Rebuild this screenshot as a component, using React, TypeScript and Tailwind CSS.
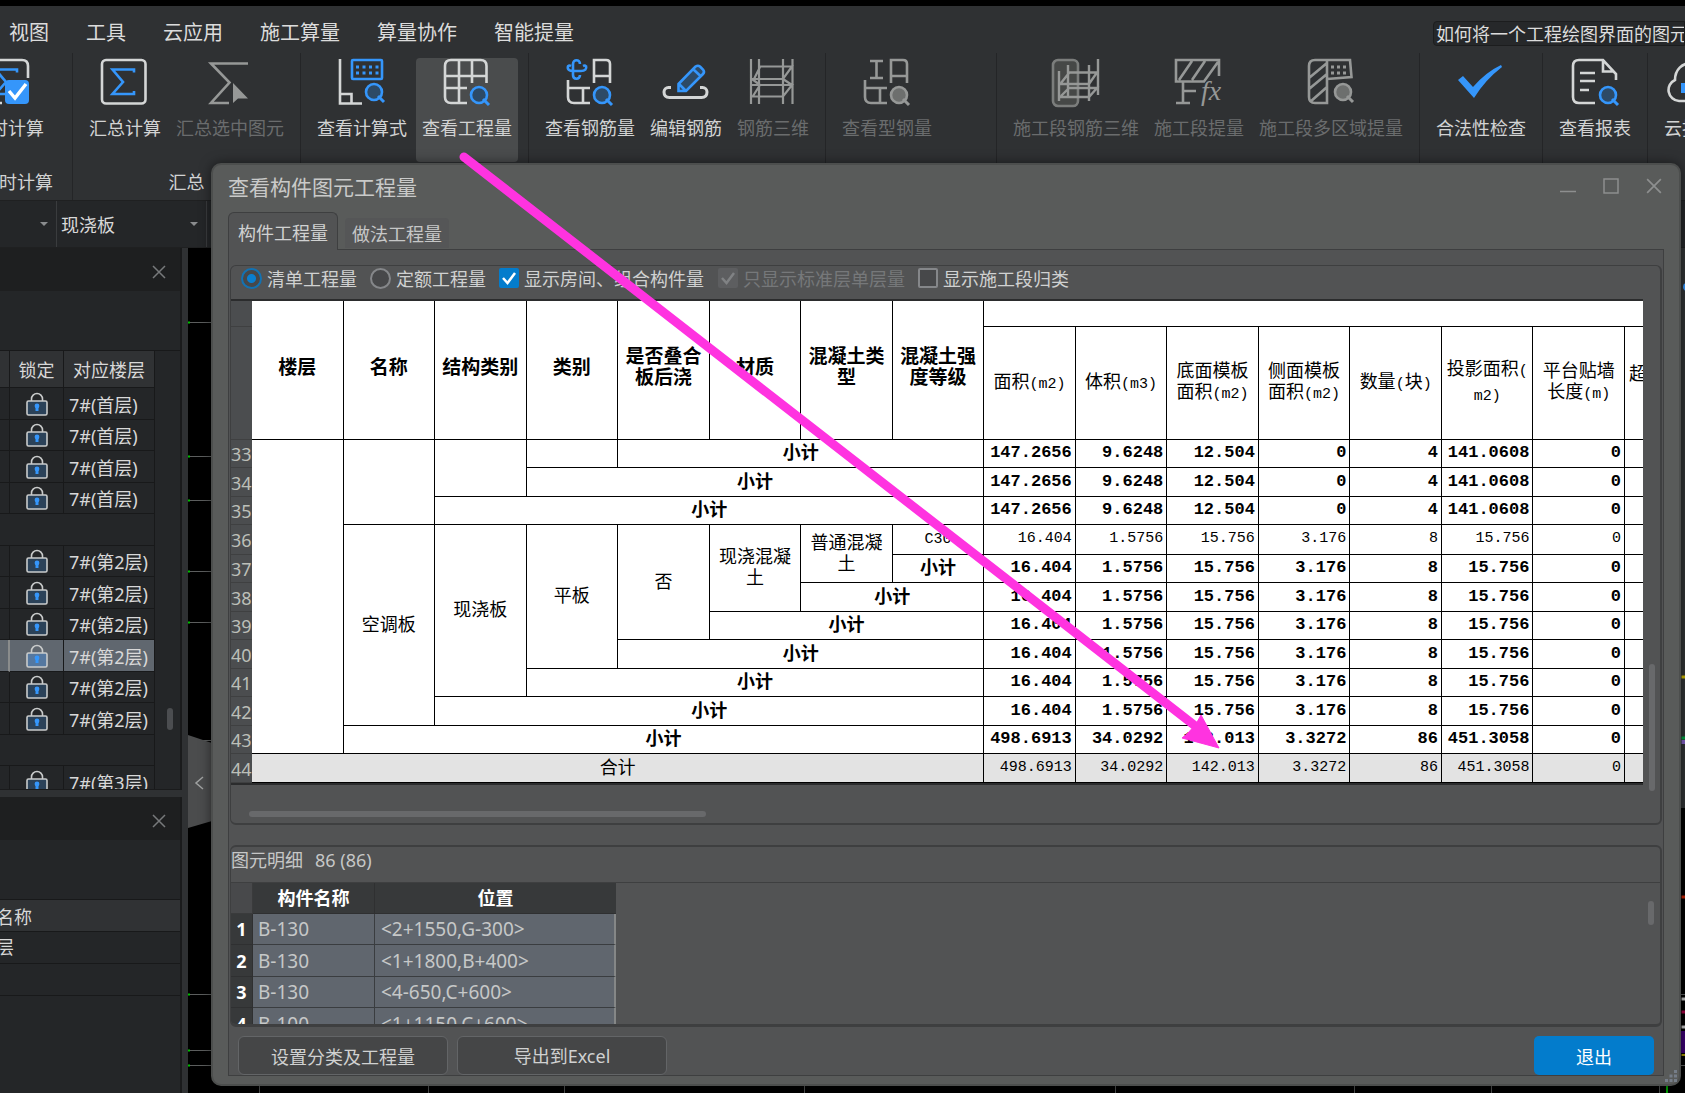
import React from "react";

const WHITE = "#d4d6d6";
const BLUE = "#3596fb";
const GREY = "#969897";

type IconProps = { children: React.ReactNode };

function Icon({ children }: IconProps) {
  return (
    <svg className="size-12 shrink-0 overflow-visible" viewBox="0 0 48 48" fill="none" strokeWidth="2.6" aria-hidden="true">
      {children}
    </svg>
  );
}

function Lens({ x = 36, y = 37, dim = false }: { x?: number; y?: number; dim?: boolean }) {
  const c = dim ? GREY : BLUE;
  return (
    <g stroke={c}>
      <circle cx={x} cy={y} r="8" fill={dim ? "#6d6f6e" : "#2d4a66"} />
      <path d={`M${x + 4} ${y + 4}L${x + 10} ${y + 10}`} strokeWidth="3" />
    </g>
  );
}

const Sigma = () => <path stroke={BLUE} d="M33 14.5V11.5H11.5L22 24 11.5 36H33V33" />;

const icons = {
  realtime: (
    <Icon>
      <path stroke={WHITE} d="M44 20V8q0-6-6-6H7Q1 2 1 8v31q0 6 6 6h11" />
      <Sigma />
      <rect x="21" y="22" width="24" height="24" rx="4" fill={BLUE} />
      <path d="M25 33l6 7 11-14" stroke="#fff" strokeWidth="3.4" />
    </Icon>
  ),
  sum: (
    <Icon>
      <rect x="1" y="2" width="43.5" height="43.5" rx="4" stroke={WHITE} />
      <Sigma />
    </Icon>
  ),
  sumSelected: (
    <Icon>
      <path d="M42 5.500H5L23.500 24.500 5 45H23" stroke={GREY} />
      <path d="M27 25v20l5-4.500h10z" fill={GREY} />
    </Icon>
  ),
  formula: (
    <Icon>
      <path stroke={WHITE} d="M2 1V45.500H24M2 36H13.500V45.500" />
      <rect x="14" y="2" width="30" height="19" rx="1" stroke={BLUE} />
      <path d="M18 9h24M18 15h24" stroke={BLUE} strokeWidth="3" strokeDasharray="3 3.500" />
      <Lens y={34} />
    </Icon>
  ),
  quantity: (
    <Icon>
      <path stroke={WHITE} d="M43.500 25V8q0-6-6-6H8Q2 2 2 8v31q0 6 6 6h16M16 2V45M29 2V25M2 18H43.500M2 30H24" />
      <Lens />
    </Icon>
  ),
  rebar: (
    <Icon>
      <path stroke={BLUE} d="M14 6c0-5-7-5-7 0v11c0 5 7 5 7 0M2 8c-1 4 2 5 5 5h8c4 0 6-2 5-5M5 8c-2-1-3 0-3 1M17 8c2-1 3 0 3 1" />
      <path stroke={WHITE} d="M28 25V2H40q4 0 4 4V25M28 18H44M2 22V39q0 6 6 6h16M2 30H24M17 30V45" />
      <Lens />
    </Icon>
  ),
  edit: (
    <Icon>
      <path stroke={WHITE} strokeWidth="3" d="M9 29.500H6.500a4.500 4.500 0 0 0-4.500 4.500q0 5.500 5.500 5.500h32q5.500 0 5.500-5.500a4.500 4.500 0 0 0-4.500-4.500H38" />
      <path stroke={BLUE} d="M16.500 26L33.500 8.500q2.500-1.500 4.500 0l3 3q2 2.500 0 4.500L24 33h-7.500zM31 11l8 7.500M17 26l7 7" fill="#2d4a66" />
    </Icon>
  ),
  rebar3d: (
    <Icon>
      <path stroke={GREY} d="M2 1V46M10 1V46M34 1V46M43.500 1V46M10 8.500H43L34 21H2M5 21L11 9M2 27H43L34 38.500H2M4 38L11 27M3 21l8 6M34 21l9 6" strokeWidth="2.200" />
    </Icon>
  ),
  steel: (
    <Icon>
      <path stroke={GREY} d="M7 3H20M7 20H20M13.500 3V20M28 25V2H40q4 0 4 4V25M28 18H44M2 22V39q0 6 6 6h16M2 30H24M17 30V45" />
      <Lens dim />
    </Icon>
  ),
  segment3d: (
    <Icon>
      <rect x="1" y="2" width="25" height="46" rx="5" stroke="#7b7d7c" fill="#464847" />
      <path stroke={GREY} strokeWidth="2.400" d="M7 13V43M16 7V40M37 7V43M46 1V37M15 14.500H45L37 26H7M9 25L17 15M15 30H45L37 39H7M9 38L17 30" />
    </Icon>
  ),
  segmentQty: (
    <Icon>
      <path stroke={GREY} d="M44 18V2H1V23.500H29L43 4M4 22L17 3M17 22L30 3M8 24V45M1 45H15M8 33H21" />
      <text x="26" y="42" fill={GREY} className="font-['Liberation_Serif'] text-[28px] italic">fx</text>
    </Icon>
  ),
  segmentArea: (
    <Icon>
      <path stroke={GREY} d="M20 2H8Q2 2 2 8v31q0 6 6 6h12zM2 20L20 5M2 31L20 16M3 44L20 29M20 2H43l1.500 17L20 21" />
      <path d="M24 9h16M24 15h16" stroke={GREY} strokeWidth="3" strokeDasharray="3 3" />
      <Lens y={34} dim />
    </Icon>
  ),
  check: (
    <Icon>
      <path d="M1 22l5-4 10 11Q29 14 44 7l1 2Q28 22 17 40z" fill={BLUE} />
    </Icon>
  ),
  report: (
    <Icon>
      <path stroke={WHITE} d="M24 45H8q-6 0-6-6V8q0-6 6-6H32L45 16v6M32 2V13.500H43M9 15H24M9 23H24M9 32H18" />
      <Lens x={37} />
    </Icon>
  ),
  cloud: (
    <Icon>
      <path stroke={WHITE} d="M12 43a11 11 0 0 1-4-21C8 0 38 0 40 20c10 4 8 22-4 23z" />
      <path d="M16 25V35M23 20V35M30 23V35" stroke={BLUE} strokeWidth="4" />
    </Icon>
  ),
};

type Tool = { label: string; icon: React.ReactNode; off?: boolean; on?: boolean };

const toolGroups: { caption?: string; wide?: boolean; tools: Tool[] }[] = [
  {
    caption: "汇总",
    tools: [
      { label: "汇总计算", icon: icons.sum },
      { label: "汇总选中图元", icon: icons.sumSelected, off: true },
    ],
  },
  {
    tools: [
      { label: "查看计算式", icon: icons.formula },
      { label: "查看工程量", icon: icons.quantity, on: true },
    ],
  },
  {
    tools: [
      { label: "查看钢筋量", icon: icons.rebar },
      { label: "编辑钢筋", icon: icons.edit },
      { label: "钢筋三维", icon: icons.rebar3d, off: true },
    ],
  },
  { wide: true, tools: [{ label: "查看型钢量", icon: icons.steel, off: true }] },
  {
    tools: [
      { label: "施工段钢筋三维", icon: icons.segment3d, off: true },
      { label: "施工段提量", icon: icons.segmentQty, off: true },
      { label: "施工段多区域提量", icon: icons.segmentArea, off: true },
    ],
  },
  { tools: [{ label: "合法性检查", icon: icons.check }] },
  { tools: [{ label: "查看报表", icon: icons.report }] },
  { tools: [{ label: "云指标", icon: icons.cloud }] },
];

function ToolButton({ label, icon, off, on }: Tool) {
  return (
    <button
      disabled={off}
      className={`flex h-[104px] shrink-0 flex-col items-center gap-[9px] rounded px-[6px] text-lg/6 whitespace-nowrap ${
        on ? "bg-[#4a4c4d]" : ""
      } ${off ? "text-[#6a6c6d]" : "text-[#d2d3d3]"}`}
    >
      {icon}
      <span>{label}</span>
    </button>
  );
}

function Ribbon() {
  return (
    <div className="flex h-[150px] shrink-0 overflow-hidden bg-[#2f3133] pt-[3px] text-[#d2d3d3]">
      <div className="flex w-[72px] shrink-0 flex-col items-end justify-between pt-[5px] pb-[7px]">
        <div className="flex pr-[22px]">
          <ToolButton label="实时计算" icon={icons.realtime} />
        </div>
        <span className="pr-[19px] text-lg/6 whitespace-nowrap">实时计算</span>
      </div>
      {toolGroups.map((g, i) => (
        <div
          key={i}
          className={`flex shrink-0 flex-col items-center justify-between border-l border-[#242527] px-[10px] pt-[5px] pb-[7px] ${
            g.wide ? "w-[171px]" : ""
          }`}
        >
          <div className={`flex gap-[3px] ${g.wide ? "self-start" : ""}`}>
            {g.tools.map((t) => (
              <ToolButton key={t.label} {...t} />
            ))}
          </div>
          <span className="h-6 text-lg/6">{g.caption}</span>
        </div>
      ))}
    </div>
  );
}

function Combo({ value, width, label }: { value: string; width: string; label: string }) {
  return (
    <div className={`flex items-center border-r border-[#3a3c3e] ${width}`}>
      <select
        aria-label={label}
        defaultValue={value}
        className="min-w-0 flex-1 appearance-none bg-transparent pl-1 text-lg/6 text-[#d8d8d8] outline-none"
      >
        <option>{value}</option>
      </select>
      <svg className="mr-2 h-2 w-2 shrink-0" viewBox="0 0 8 8" aria-hidden="true">
        <path d="M0 2h8L4 6z" fill="#8a8c8e" />
      </svg>
    </div>
  );
}

function CloseMark({ className }: { className: string }) {
  return (
    <svg className={className} viewBox="0 0 14 14" stroke="currentColor" fill="none" strokeWidth="1.500" aria-hidden="true">
      <path d="M1 1L13 13M13 1L1 13" />
    </svg>
  );
}

function Lock({ selected }: { selected: boolean }) {
  return (
    <svg className="mx-auto h-6 w-[22px]" viewBox="0 0 22 24" fill="none" aria-label="锁定" role="img">
      <path d="M5.500 9V7a5.500 5.500 0 0 1 11 0V9" stroke="#c9cbcb" strokeWidth="1.600" />
      <rect x="1" y="9" width="20" height="14" rx="1.500" stroke="#c9cbcb" strokeWidth="1.600" fill={selected ? "#5578a0" : "#2b4259"} />
      <path d="M11 13v6" stroke={BLUE} strokeWidth="3" />
      <circle cx="11" cy="14" r="2.400" fill={BLUE} />
    </svg>
  );
}

const drawings = [
  "7#(首层)", "7#(首层)", "7#(首层)", "7#(首层)", "",
  "7#(第2层)", "7#(第2层)", "7#(第2层)", "7#(第2层)", "7#(第2层)", "7#(第2层)", "",
  "7#(第3层)",
];

function DrawingPanel() {
  return (
    <section className="flex h-[542px] shrink-0 flex-col overflow-hidden border-r-2 border-b border-[#1a1b1c] bg-[#242628]">
      <header className="flex h-[43px] shrink-0 items-center justify-end bg-[#1e1f20] pt-1 pr-[14px]">
        <button aria-label="关闭" className="text-[#77797b]">
          <CloseMark className="size-[14px]" />
        </button>
      </header>
      <div className="h-[60px] shrink-0 border-b border-[#18191a]" />
      <div className="flex min-h-0 flex-1 justify-between">
        <table className="w-[155px] table-fixed border-separate border-spacing-0 self-start text-lg/6 text-[#d8d8d8]">
          <colgroup>
            <col className="w-[10px]" />
            <col className="w-[54px]" />
            <col />
          </colgroup>
          <thead>
            <tr className="bg-[#303234]">
              <th className="h-[37px] border-r border-b border-[#18191a] p-0"><span className="sr-only">序号</span></th>
              <th className="border-r border-b border-[#18191a] p-0 font-normal">锁定</th>
              <th className="border-r border-b border-[#18191a] p-0 font-normal">对应楼层</th>
            </tr>
          </thead>
          <tbody>
            {drawings.map((d, i) => {
              const sel = i === 8;
              return (
                <tr key={i} className="h-8 even:h-[31px]">
                  {d === "" ? (
                    <td colSpan={3} className="border-r border-b border-[#18191a] p-0" />
                  ) : (
                    <>
                      <td className={`border-b border-[#18191a] p-0 ${sel ? "border-r-2 border-r-[#8a8c8c] bg-[#60676f]" : "border-r"}`} />
                      <td className={`border-r border-b border-[#18191a] p-0 ${sel ? "bg-[#60676f]" : ""}`}>
                        <Lock selected={sel} />
                      </td>
                      <td className={`border-r border-b border-[#18191a] p-0 pt-[2px] pl-[5px] font-['Noto_Sans','Noto_Sans_CJK_SC',sans-serif] whitespace-nowrap ${sel ? "bg-[#60676f]" : ""}`}>
                        {d}
                      </td>
                    </>
                  )}
                </tr>
              );
            })}
          </tbody>
        </table>
        <div className="flex w-[24px] items-end justify-center pb-[59px] pl-1">
          <div className="h-[22px] w-[6px] rounded-full bg-[#4b4d50]" />
        </div>
      </div>
    </section>
  );
}

function FloorPanel() {
  return (
    <section className="min-h-0 flex-1 overflow-hidden border-r-2 border-[#1a1b1c] bg-[#242628]">
      <header className="flex h-[43px] items-center justify-end bg-[#1e1f20] pt-1 pr-[14px]">
        <button aria-label="关闭" className="text-[#77797b]">
          <CloseMark className="size-[14px]" />
        </button>
      </header>
      <div className="h-[59px]" />
      <div className="border-y border-[#18191a] text-lg/6 text-[#d8d8d8]">
        <div className="h-8 border-b border-[#18191a] bg-[#303234] py-1 -indent-1">名称</div>
        <div className="h-8 border-b border-[#18191a] py-[2px] -indent-1">层</div>
        <div className="h-[31px]" />
      </div>
    </section>
  );
}

function Canvas() {
  const left = [74, 208, 252, 323, 374, 492, 746, 802, 817];
  const bottom = [71, 240, 376, 616, 927, 1166, 1303, 1471];
  return (
    <div className="relative flex min-w-0 flex-1 bg-black">
      <svg className="h-full w-full" aria-hidden="true">
        {left.map((y) => (
          <g key={y}>
            <path d={`M1 ${y + 0.5}H1600`} stroke="#5c5e5e" />
            <path d={`M0 ${y + 0.5}h2`} stroke="#00c000" strokeWidth="2" />
          </g>
        ))}
        {bottom.map((x) => (
          <path key={x} d={`M${x}.5 830V850`} stroke="#4c4e4e" />
        ))}
        <path d="M1479 830V850" stroke="#00a000" strokeWidth="2" />
        <path d="M0 487L24 495V573L0 580z" fill="#4b4c4d" />
        <path d="M15 529L8 535 15 541" stroke="#a0a2a2" strokeWidth="1.500" fill="none" />
        <rect x="1492" y="0" width="6" height="560" fill="#303234" />
        <path d="M1493.500 429H1500" stroke="#c8b400" strokeWidth="3" />
        <path d="M1493.500 490H1500" stroke="#00a040" strokeWidth="3" />
        <path d="M1493.500 494H1500" stroke="#8060c0" strokeWidth="4" />
        <path d="M1493.500 649H1500" stroke="#c02000" strokeWidth="3" />
        <path d="M1493.500 751H1500" stroke="#c0c0c0" strokeWidth="3" />
        <path d="M1493.500 764H1500" stroke="#a00040" strokeWidth="3" />
        <path d="M1493.500 779H1500" stroke="#c0c0c0" strokeWidth="3" />
        <rect x="1493" y="783" width="5" height="22" fill="#3a0070" />
        <path d="M1493.500 807H1500" stroke="#a09000" strokeWidth="2" />
        <circle cx="1499" cy="39" r="4" fill={BLUE} />
      </svg>
    </div>
  );
}

/* Half-width characters are set in a monospaced face beside the full-width ones. */
function Mixed({ text }: { text: string }) {
  return (
    <>
      {text.split(/([ -~]+)/).map((p, i) =>
        /^[ -~]+$/.test(p) ? (
          <span key={i} className="font-['Liberation_Mono'] text-[15px]">{p}</span>
        ) : (
          p
        ),
      )}
    </>
  );
}

const groupHeads: string[][] = [
  ["楼层"], ["名称"], ["结构类别"], ["类别"], ["是否叠合", "板后浇"], ["材质"], ["混凝土类", "型"], ["混凝土强", "度等级"],
];
const valueHeads: string[][] = [
  ["面积(m2)"], ["体积(m3)"], ["底面模板", "面积(m2)"], ["侧面模板", "面积(m2)"], ["数量(块)"], ["投影面积(", "m2)"], ["平台贴墙", "长度(m)"],
];

type Cell = { t?: string[]; c?: number; r?: number; b?: boolean };
type Row = { n: number; cells: Cell[]; v: string[]; bold: boolean; total?: boolean };

const sub = (c: number): Cell => ({ t: ["小计"], c, b: true });
const a = ["147.2656", "9.6248", "12.504", "0", "4", "141.0608", "0"];
const k = ["16.404", "1.5756", "15.756", "3.176", "8", "15.756", "0"];
const s = ["498.6913", "34.0292", "142.013", "3.3272", "86", "451.3058", "0"];

const rows: Row[] = [
  { n: 33, cells: [{ r: 11 }, { r: 3 }, { r: 2 }, {}, sub(4)], v: a, bold: true },
  { n: 34, cells: [sub(5)], v: a, bold: true },
  { n: 35, cells: [sub(6)], v: a, bold: true },
  {
    n: 36,
    cells: [
      { t: ["空调板"], r: 7 }, { t: ["现浇板"], r: 6 }, { t: ["平板"], r: 5 }, { t: ["否"], r: 4 },
      { t: ["现浇混凝", "土"], r: 3 }, { t: ["普通混凝", "土"], r: 2 }, { t: ["C30"] },
    ],
    v: k,
    bold: false,
  },
  { n: 37, cells: [sub(1)], v: k, bold: true },
  { n: 38, cells: [sub(2)], v: k, bold: true },
  { n: 39, cells: [sub(3)], v: k, bold: true },
  { n: 40, cells: [sub(4)], v: k, bold: true },
  { n: 41, cells: [sub(5)], v: k, bold: true },
  { n: 42, cells: [sub(6)], v: k, bold: true },
  { n: 43, cells: [sub(7)], v: s, bold: true },
  { n: 44, cells: [{ t: ["合计"], c: 8 }], v: s, bold: false, total: true },
];

function Lines({ t }: { t: string[] }) {
  return (
    <>
      {t.map((l, i) => (
        <span key={i} className="block whitespace-nowrap">
          <Mixed text={l} />
        </span>
      ))}
    </>
  );
}

function QuantityTable() {
  return (
    <table className="w-full table-fixed border-separate border-spacing-0 border-y-2 border-[#2b2c2d] bg-white text-lg/[21px] text-black">
      <colgroup>
        <col className="w-[21px]" />
        {Array.from({ length: 15 }, (_, i) => (
          <col key={i} />
        ))}
        <col className="w-[18px]" />
      </colgroup>
      <thead>
        <tr className="h-[26px]">
          <td className="border-b border-[#3f4041] bg-[#4b4d4f] p-0" />
          {groupHeads.map((h) => (
            <th key={h[0]} rowSpan={2} className="border-r border-b border-black p-0 pb-[10px] text-[19px]/[21px] font-bold">
              <Lines t={h} />
            </th>
          ))}
          <th colSpan={8} className="border-b border-black p-0" />
        </tr>
        <tr className="h-[113px]">
          <td className="border-b border-[#3f4041] bg-[#4b4d4f] p-0" />
          {valueHeads.map((h, i) => (
            <th key={i} className="border-r border-b border-black p-0 pb-[2px] font-normal">
              <Lines t={h} />
            </th>
          ))}
          <th className="overflow-hidden border-b border-black p-0 pb-[22px] pl-1 text-left font-normal">超</th>
        </tr>
      </thead>
      <tbody>
        {rows.map((row) => (
          <tr key={row.n} className={`h-[28px] even:h-[29px] ${row.total ? "bg-[#e3e3e3]" : ""}`}>
            <th className="overflow-hidden border-b border-[#3f4041] bg-[#4b4d4f] p-0 pt-[2px] text-left font-['Noto_Sans'] font-normal text-[#bcbfb8]">
              {row.n}
            </th>
            {row.cells.map((c, i) => (
              <td
                key={i}
                colSpan={c.c ?? 1}
                rowSpan={c.r ?? 1}
                className={`border-r border-b border-black p-0 pb-1 text-center ${c.b ? "font-bold" : ""}`}
              >
                {c.t && <Lines t={c.t} />}
              </td>
            ))}
            {row.v.map((v, i) => (
              <td
                key={i}
                className={`border-r border-b border-black p-0 pr-[3px] pb-[2px] text-right font-['Liberation_Mono',monospace] ${
                  row.bold ? "text-[17px] font-bold" : "text-[15px]"
                }`}
              >
                {v}
              </td>
            ))}
            <td className="border-b border-black p-0" />
          </tr>
        ))}
      </tbody>
    </table>
  );
}

function Radio({ label, checked }: { label: string; checked?: boolean }) {
  return (
    <label className="flex items-center gap-[5px] whitespace-nowrap">
      <input
        type="radio"
        name="mode"
        defaultChecked={checked}
        className="size-[21px] appearance-none rounded-full border-2 border-[#85878a] bg-[#47484a] bg-clip-padding checked:border-[#1272b3] checked:bg-[radial-gradient(circle,#0a7fd0_0_4px,#47484a_5px)]"
      />
      {label}
    </label>
  );
}

function Check({ label, checked, disabled }: { label: string; checked?: boolean; disabled?: boolean }) {
  return (
    <label className={`flex items-center gap-[5px] whitespace-nowrap ${disabled ? "text-[#76787a]" : ""}`}>
      <span className="grid size-5 place-items-center">
        <input
          type="checkbox"
          defaultChecked={checked}
          disabled={disabled}
          className="col-start-1 row-start-1 size-5 appearance-none rounded-xs border-2 border-[#85878a] bg-[#47484a] enabled:checked:border-[#037ccc] enabled:checked:bg-[#037ccc] disabled:border-[#5d5e60] disabled:bg-[#5d5e60]"
        />
        {checked && (
          <svg className="pointer-events-none col-start-1 row-start-1 size-4" viewBox="0 0 16 16" aria-hidden="true">
            <path d="M2 8l4.500 5L14 3" fill="none" stroke={disabled ? "#808284" : "#fff"} strokeWidth="2.500" />
          </svg>
        )}
      </span>
      {label}
    </label>
  );
}

const details = [
  ["B-130", "<2+1550,G-300>"],
  ["B-130", "<1+1800,B+400>"],
  ["B-130", "<4-650,C+600>"],
  ["B-100", "<1+1150,C+600>"],
];

function Details() {
  return (
    <section className="mt-5 flex min-h-0 flex-1 flex-col overflow-hidden rounded-md border-t-2 border-r-2 border-b-3 border-l border-[#3e3f40]">
      <h2 className="h-[35px] shrink-0 py-[1px] font-['Noto_Sans','Noto_Sans_CJK_SC',sans-serif] text-lg/6 text-[#c6c7c7]">
        图元明细<span className="ml-3">86 (86)</span>
      </h2>
      <div className="flex min-h-0 flex-1 items-start justify-between overflow-hidden border-t border-[#3e3f40]">
        <table className="w-[385px] table-fixed border-separate border-spacing-0 font-['Noto_Sans','Noto_Sans_CJK_SC',sans-serif] text-lg/6 text-[#c6c8c8]">
          <colgroup>
            <col className="w-[22px]" />
            <col className="w-[122px]" />
            <col />
          </colgroup>
          <thead>
            <tr className="h-[31px] text-white">
              <td className="border-r border-b border-[#3a3b3c] bg-[#48494b] p-0" />
              <th className="border-r border-b border-[#2f3031] bg-[#37393a] p-0 font-bold">构件名称</th>
              <th className="border-b border-[#2f3031] bg-[#37393a] p-0 font-bold">位置</th>
            </tr>
          </thead>
          <tbody>
            {details.map(([name, pos], i) => (
              <tr key={i} className="h-[31px] even:h-8">
                <th className="border-r border-b border-[#2f3031] bg-[#37393a] p-0 text-center font-bold text-white">{i + 1}</th>
                <td className="border-r border-b border-[#3a3d40] bg-[#60666e] p-0 pl-[5px] text-[19px]">{name}</td>
                <td className="border-r-2 border-b border-[#3a3d40] border-r-[#858787] bg-[#60666e] p-0 pl-[6px] text-[19px]">{pos}</td>
              </tr>
            ))}
          </tbody>
        </table>
        <div className="mt-[18px] mr-[6px] h-6 w-[6px] rounded-full bg-[#68696b]" />
      </div>
    </section>
  );
}

function QuantityDialog() {
  return (
    <div
      role="dialog"
      aria-label="查看构件图元工程量"
      className="absolute top-[163px] right-1 bottom-[7px] left-[211px] flex flex-col rounded-[10px] border-2 border-[#4c4e4d] bg-[#595b5a] px-[15px] pb-[8px] text-[#d0d1d1] shadow-[0_0_12px_rgba(0,0,0,0.5)]"
    >
      <header className="flex h-[47px] shrink-0 items-center justify-between pb-[6px]">
        <h1 className="text-[21px]/7 text-[#c9cac9]">查看构件图元工程量</h1>
        <div className="flex items-center gap-[27px] pr-[2px] text-[#8d8f8f]">
          <button aria-label="最小化">
            <svg className="size-4" viewBox="0 0 16 16" stroke="currentColor" strokeWidth="1.500" aria-hidden="true">
              <path d="M0 13.500H16" />
            </svg>
          </button>
          <button aria-label="最大化">
            <svg className="size-4" viewBox="0 0 16 16" fill="none" stroke="currentColor" strokeWidth="1.500" aria-hidden="true">
              <rect x="1" y="1" width="14" height="14" />
            </svg>
          </button>
          <button aria-label="关闭">
            <CloseMark className="size-4" />
          </button>
        </div>
      </header>
      <div role="tablist" className="z-10 -mb-px flex h-[38px] shrink-0 items-end gap-[7px] text-lg/6">
        <button role="tab" aria-selected="true" className="h-full rounded-t-md border border-b-0 border-[#3e3f40] bg-[#525354] px-[9px]">
          构件工程量
        </button>
        <button role="tab" aria-selected="false" className="mb-[2px] h-[30px] rounded-t bg-[#555657] px-[7px] text-[#c6c7c7]">
          做法工程量
        </button>
      </div>
      <div className="flex min-h-0 flex-1 flex-col border border-[#3e3f40] bg-[#525354] px-[1px] pt-[15px]">
        <section className="rounded-md border-t border-r-2 border-b-2 border-l border-[#3e3f40] pb-[6px]">
          <div className="flex h-[33px] items-start pl-[10px] text-lg/6">
            <Radio label="清单工程量" checked />
            <div className="w-[13px]" />
            <Radio label="定额工程量" />
            <div className="w-[13px]" />
            <Check label="显示房间、组合构件量" checked />
            <div className="w-[14px]" />
            <Check label="只显示标准层单层量" checked disabled />
            <div className="w-[13px]" />
            <Check label="显示施工段归类" />
          </div>
          <div className="flex">
            <div className="min-w-0 flex-1 overflow-hidden">
              <QuantityTable />
            </div>
            <div className="flex w-[17px] items-end justify-center">
              <div className="-mb-[6px] h-[127px] w-[6px] rounded-full bg-[#68696b]" />
            </div>
          </div>
          <div className="mt-[26px] ml-[18px] h-[6px] w-[457px] rounded-full bg-[#68696b]" />
        </section>
        <Details />
        <footer className="flex shrink-0 items-center gap-[9px] pt-[9px] pr-2 pl-2 text-lg/6">
          <button className="h-[39px] w-[210px] rounded-md border border-[#636567] bg-[#454647]">设置分类及工程量</button>
          <button className="h-[39px] w-[210px] rounded-md border border-[#636567] bg-[#454647] font-['Noto_Sans','Noto_Sans_CJK_SC',sans-serif]">
            导出到Excel
          </button>
          <button className="ml-auto h-[39px] w-[120px] rounded-[5px] bg-[#037ccc] text-white">退出</button>
        </footer>
      </div>
      <svg className="absolute right-[2px] bottom-[2px] size-3" viewBox="0 0 12 12" fill="#757d88" aria-hidden="true">
        <path d="M9 0h3v3H9zM4.500 4.500h3v3h-3zM9 4.500h3v3H9zM0 9h3v3H0zM4.500 9h3v3h-3zM9 9h3v3H9z" />
      </svg>
    </div>
  );
}

function Pointer() {
  return (
    <svg className="pointer-events-none absolute inset-0 h-full w-full" aria-hidden="true">
      <path d="M464 157L1194 725" stroke="#ff33e0" strokeWidth="9" strokeLinecap="round" />
      <path d="M1219 748L1201 715 1196 724 1188 733 1182 738z" fill="#ff33e0" stroke="#ff33e0" />
    </svg>
  );
}

export default function App() {
  return (
    <div className="relative flex h-screen flex-col overflow-hidden bg-[#2f3133] font-['Noto_Sans_CJK_SC',sans-serif]">
      <div className="h-[6px] shrink-0 bg-black" />
      <nav className="flex h-11 shrink-0 items-center justify-between bg-[#2f3133] pl-[9px] text-xl/7 text-[#dcdcdc]">
        <div className="flex gap-[37px] pt-2">
          {["视图", "工具", "云应用", "施工算量", "算量协作", "智能提量"].map((m) => (
            <button key={m} className="whitespace-nowrap">{m}</button>
          ))}
        </div>
        <input
          aria-label="搜索"
          defaultValue="如何将一个工程绘图界面的图元"
          className="mt-[10px] h-[25px] w-[252px] rounded-l border border-[#1c1d1e] bg-[#26282a] pl-[2px] text-lg/6 text-[#dcdcdc] outline-none"
        />
      </nav>
      <Ribbon />
      <div className="flex h-12 shrink-0 border-y border-[#1f2021] bg-[#242628]">
        <Combo label="楼层" value="" width="w-[57px]" />
        <Combo label="构件类型" value="现浇板" width="w-[150px]" />
      </div>
      <div className="flex min-h-0 flex-1">
        <aside className="flex w-[188px] shrink-0 flex-col gap-[7px] pr-[6px]">
          <DrawingPanel />
          <FloorPanel />
        </aside>
        <Canvas />
      </div>
      <QuantityDialog />
      <Pointer />
    </div>
  );
}
